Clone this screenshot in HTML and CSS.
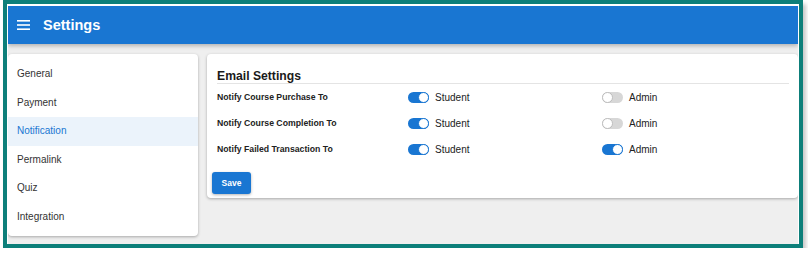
FILE: index.html
```html
<!DOCTYPE html>
<html lang="en">
<head>
	<meta charset="UTF-8">
	<title>Settings</title>
<link rel="stylesheet" href="styles.css">
</head>
<body>
	<div class='frame'>
		<div class='app'>
			<div class='topbar'>
				<svg class='menuIcon' width='13' height='10' viewBox='0 0 13 10'>
					<rect x='0' y='0' width='13' height='1.6' fill='#fff'/>
					<rect x='0' y='4.2' width='13' height='1.6' fill='#fff'/>
					<rect x='0' y='8.4' width='13' height='1.6' fill='#fff'/>
				</svg>
				<span class='topTitle'>Settings</span>
			</div>
			<div class='body'>
				<div class='sideMenu'>
					<div class='menuItem'>General</div>
					<div class='menuItem'>Payment</div>
					<div class='menuItem active'>Notification</div>
					<div class='menuItem'>Permalink</div>
					<div class='menuItem'>Quiz</div>
					<div class='menuItem'>Integration</div>
				</div>
				<div class='card'>
					<div class='cardTitle'>Email Settings</div>
					<div class='row'>
						<div class='label'>Notify Course Purchase To</div>
						<div class='opt'><span class='switch on'></span>Student</div>
						<div class='opt'><span class='switch'></span>Admin</div>
					</div>
					<div class='row'>
						<div class='label'>Notify Course Completion To</div>
						<div class='opt'><span class='switch on'></span>Student</div>
						<div class='opt'><span class='switch'></span>Admin</div>
					</div>
					<div class='row'>
						<div class='label'>Notify Failed Transaction To</div>
						<div class='opt'><span class='switch on'></span>Student</div>
						<div class='opt'><span class='switch on'></span>Admin</div>
					</div>
					<button class='saveBtn'>Save</button>
				</div>
			</div>
		</div>
	</div>
</body>
</html>
```

FILE: styles.css
```css
body{
	margin:0;
	background:#fff;
	font-family:"Liberation Sans",Arial,sans-serif;
	color:#222;
}
.frame{
	box-sizing:border-box;
	width:800px;height:248px;
	margin-left:3px;
	border:4px solid #0d7f7a;
	padding:2px 1px 0 1px;
	background:#fff;
	box-shadow:3px 4px 4px rgba(0,0,0,.22);
}
.app{
	height:100%;
	background:#efefef;
	overflow:hidden;
}
.topbar{
	position:relative;
	display:flex;
	align-items:center;
	height:38px;
	padding-left:9px;
	background:#1976d2;
	box-shadow:0 2px 4px rgba(0,0,0,.25);
}
.menuIcon{
	margin-right:13px;
}
.topTitle{
	color:#fff;
	font-size:14.5px;
	font-weight:bold;
}
.body{
	display:flex;
	align-items:flex-start;
	gap:9px;
	padding-top:10px;
}
.sideMenu{
	width:190px;
	padding:6px 0 5px;
	background:#fff;
	border-radius:4px;
	box-shadow:0 1px 3px rgba(0,0,0,.3);
}
.menuItem{
	height:28.5px;line-height:28.5px;
	padding-left:9px;
	font-size:10px;
	color:#333;
}
.menuItem.active{
	background:#ebf3fb;
	color:#1976d2;
}
.card{
	flex:1;
	padding:13px 9px 4px 10px;
	background:#fff;
	border-radius:4px;
	box-shadow:0 1px 3px rgba(0,0,0,.3);
}
.cardTitle{
	height:16px;line-height:18px;
	border-bottom:1px solid #e4e4e4;
	font-size:12.2px;
	font-weight:bold;
	color:#1a1a1a;
}
.row{
	display:grid;
	grid-template-columns:191px 194px 1fr;
	align-items:center;
	height:26px;
}
.label{
	font-size:8.7px;
	font-weight:bold;
	color:#222;
}
.opt{
	display:flex;
	align-items:center;
	font-size:10px;
	color:#222;
}
.switch{
	position:relative;
	display:inline-block;
	width:21px;height:11px;
	margin-right:6px;
	border-radius:6px;
	background:#d7d7d7;
}
.switch:after{
	content:'';
	position:absolute;
	left:0;top:0;
	box-sizing:border-box;
	width:11px;height:11px;
	border-radius:50%;
	background:#fff;
	border:1px solid #bdbdbd;
}
.switch.on{
	background:#1976d2;
}
.switch.on:after{
	left:10px;
	border-color:#1976d2;
}
.saveBtn{
	display:block;
	width:39px;height:22px;
	margin:10px 0 0 -5px;
	padding:0;
	border:0;
	border-radius:3px;
	background:#1976d2;
	color:#fff;
	font-family:"Liberation Sans",Arial,sans-serif;
	font-size:8.5px;
	font-weight:bold;
	box-shadow:0 1px 3px rgba(0,0,0,.3);
}
```
